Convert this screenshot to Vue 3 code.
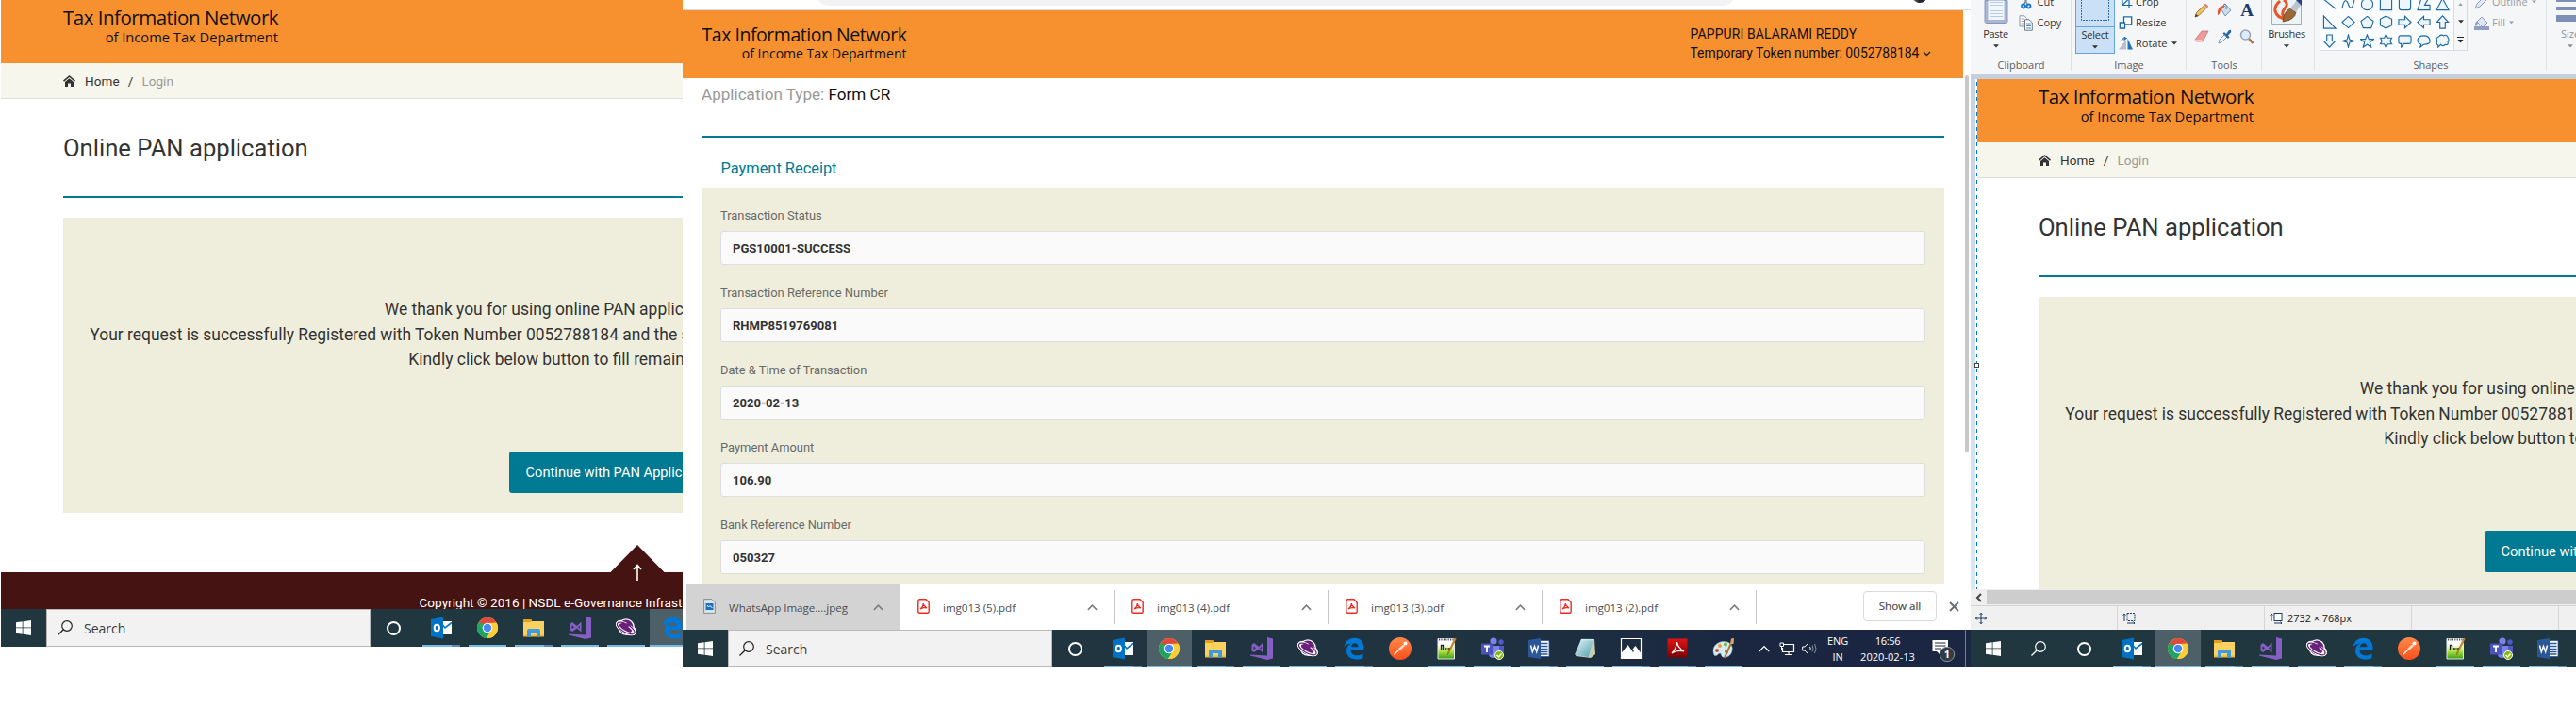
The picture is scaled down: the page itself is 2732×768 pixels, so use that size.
<script setup>
const windows = [
  {
    id: 'portal',
    tasks: ['outlook:stack', 'chrome:on', 'folder:stack', 'vs:on', 'orbit:on', 'edge:active'],
  },
  {
    id: 'receipt',
    tasks: ['outlook:stack', 'chrome:active', 'folder:stack', 'vs:on', 'orbit:on', 'edge:stack', 'postman:off', 'npp:on', 'teams:on', 'word:stack', 'notepad:on', 'photos:stack', 'acrobat:stack', 'paint:on'],
  },
  {
    id: 'paint',
    tasks: ['outlook:stack', 'chrome:active', 'folder:stack', 'vs:on', 'orbit:on', 'edge:stack', 'postman:off', 'npp:on', 'teams:on', 'word:stack'],
  },
].map((w) => ({
  ...w,
  tasks: w.tasks.map((t) => {
    const [icon, state] = t.split(':')
    return { icon, state }
  }),
}))

const fields = [
  ['Transaction Status', 'PGS10001-SUCCESS'],
  ['Transaction Reference Number', 'RHMP8519769081'],
  ['Date & Time of Transaction', '2020-02-13'],
  ['Payment Amount', '106.90'],
  ['Bank Reference Number', '050327'],
]

const downloads = ['WhatsApp Image....jpeg', 'img013 (5).pdf', 'img013 (4).pdf', 'img013 (3).pdf', 'img013 (2).pdf']

const shapes = [
  'M1 2L15 13', 'M1 13C3 2 6 2 8 8S13 14 15 2', 'M8 1.5a6.5 6.5 0 1 1 0 13a6.5 6.5 0 1 1 0-13z', 'M1.500 1.500h13v13h-13z', 'M4 1.500h8q2.500 0 2.500 2.500v8q0 2.500-2.500 2.500h-8q-2.500 0-2.500-2.500v-8q0-2.500 2.500-2.500z', 'M1 14.500L5 2H13L9 9H15V14.500z', 'M8 1.500L15 14.500H1z',
  'M1.500 1V15H15z', 'M8 1.500L15 8L8 14.500L1 8z', 'M8 1.500L15 7L12.500 14.500H3.500L1 7z', 'M8 1L14.500 4.500V11.500L8 15L1.500 11.500V4.500z', 'M1 5H8V1.500L15 8L8 14.500V11H1z', 'M15 5H8V1.500L1 8L8 14.500V11H15z', 'M5 15V8H1.500L8 1L14.500 8H11V15z',
  'M5 1V8H1.500L8 15L14.500 8H11V1z', 'M8 1L9.500 6.500L15 8L9.500 9.500L8 15L6.500 9.500L1 8L6.500 6.500z', 'M8 1L10 6H15.500L11 9.500L12.500 15L8 12L3.500 15L5 9.500L.5 6H6z', 'M8 .5L10 4.500H14.500L12.500 8L14.500 11.500H10L8 15.500L6 11.500H1.500L3.500 8L1.500 4.500H6z', 'M3 2H13Q15 2 15 4V9Q15 11 13 11H7L4 15V11H3Q1 11 1 9V4Q1 2 3 2z', 'M5 12Q1 10 1 7Q2 2 8 2T15 7T8 12L4 15z', 'M3 13Q0 11 2 8Q0 4 4 3Q6 0 9 2Q13 0 14 4Q16 7 14 9Q15 13 11 12Q8 15 6 12L3 15z',
]
</script>

<template>
  <svg class="sprite" aria-hidden="true">
    <defs>
      <linearGradient id="g-pad" x1="0" y1="0" x2="1" y2="1"><stop offset="0" stop-color="#e8f6f7" /><stop offset="1" stop-color="#4f9fae" /></linearGradient>
      <linearGradient id="g-red" x1="0" y1="0" x2="0" y2="1"><stop offset="0" stop-color="#e01313" /><stop offset="1" stop-color="#7c0303" /></linearGradient>
      <linearGradient id="g-post" x1="0" y1="0" x2="0" y2="1"><stop offset="0" stop-color="#ff8a4a" /><stop offset="1" stop-color="#fb4f1c" /></linearGradient>
      <linearGradient id="g-npp" x1="0" y1="0" x2="0" y2="1"><stop offset=".3" stop-color="#fff" /><stop offset=".6" stop-color="#b5e84a" /><stop offset="1" stop-color="#3a9c12" /></linearGradient>
    </defs>
    <symbol id="t-outlook" viewBox="0 0 24 24">
      <path d="M11 5H23V19H11z" fill="#fff" /><path d="M11.500 6.500L16 12L23 6.500" stroke="#0072c6" stroke-width="1.600" fill="none" />
      <path d="M1 3L14 .6V23.400L1 21z" fill="#0072c6" /><ellipse cx="7.300" cy="12" rx="2.600" ry="3.300" stroke="#fff" stroke-width="2" fill="none" />
    </symbol>
    <symbol id="t-chrome" viewBox="0 0 24 24">
      <circle cx="12" cy="12" r="11" fill="#fbce37" /><path d="M12 12L2.500 6.500A11 11 0 0 1 21.500 6.500L12 7z" fill="#dd4b3e" /><path d="M2.500 6.500A11 11 0 0 0 11 23L16 14.500L12 12L8 14z" fill="#1da362" /><path d="M2.500 6.500L8 14L9 8z" fill="#1da362" />
      <path d="M12 7H21.800A11 11 0 0 1 11 23L16.300 14.500z" fill="#fbce37" /><circle cx="12" cy="12" r="5.300" fill="#fff" /><circle cx="12" cy="12" r="4.200" fill="#4587f3" />
    </symbol>
    <symbol id="t-folder" viewBox="0 0 24 24">
      <path d="M1 3H9L10 5H23V21H1z" fill="#fbd25f" /><path d="M1 3H9.500V6H1z" fill="#e4a01b" /><path d="M1 19.500H23V21.500H1z" fill="#f0b93b" /><path d="M5 21.500V15Q5 13 7 13H17Q19 13 19 15V21.500H15V17H9V21.500z" fill="#3f9be0" />
    </symbol>
    <symbol id="t-vs" viewBox="0 0 24 24">
      <path d="M18 0L24 1.500V22.500L18 24L0 19.500V18.500L18 19.500z" fill="#865fc5" /><path d="M1.500 8L4 6L9 10L13.500 5.500V16.500L9 12.500L4 16L1.500 14.500zM3.500 9.500V13L6 11.200zM11.700 9.500L10 11.200L11.700 13z" fill="#865fc5" fill-rule="evenodd" />
    </symbol>
    <symbol id="t-orbit" viewBox="0 0 24 24">
      <ellipse cx="12" cy="12" rx="12" ry="6.500" transform="rotate(30 12 12)" fill="#fff" /><circle cx="12" cy="11" r="8.700" fill="#fff" /><circle cx="12" cy="11" r="7.500" fill="#68217a" />
      <ellipse cx="12" cy="12.500" rx="10.500" ry="4" transform="rotate(30 12 12)" fill="none" stroke="#fff" stroke-width="3" /><ellipse cx="12" cy="12.500" rx="10.500" ry="4.200" transform="rotate(30 12 12)" fill="none" stroke="#68217a" stroke-width="1.200" />
      <path d="M6 8L9 6L12 8L15 6L18 9L13 11.500z" fill="#68217a" />
    </symbol>
    <symbol id="t-edge" viewBox="0 0 24 24">
      <path d="M1.500 10.500C2.500 4 7 .7 12.500 .7C19 .7 22.500 5.500 22.500 11V14H8.500C8.700 17.600 11.500 19.300 15 19.300C17.500 19.300 19.700 18.600 21.500 17.500V22C19.500 23 17 23.500 14.300 23.500C8 23.500 4 19.800 4 14.300C4 10.800 6 7.900 8.900 6.500C5.500 6.700 3 8.300 1.500 10.500zM8.800 10.300H16.500C16.500 7.700 15 6.300 12.900 6.300C10.600 6.300 9.100 8 8.800 10.300z" fill="#0078d7" />
    </symbol>
    <symbol id="t-postman" viewBox="0 0 24 24">
      <circle cx="12" cy="12" r="12" fill="url(#g-post)" /><path d="M5.500 18.500L12 12L15 9" stroke="#fff" stroke-width="1.300" fill="none" /><path d="M10 12L15.500 7.500L17 9L12 14z" fill="#ffd9c8" /><circle cx="17.500" cy="6.500" r="2" fill="#fff" />
    </symbol>
    <symbol id="t-npp" viewBox="0 0 24 24">
      <path d="M3 1.500H20.500V23H3z" fill="url(#g-npp)" stroke="#e8e8e8" stroke-width="1" /><path d="M4 2.500H20" stroke="#555" stroke-width="2" stroke-dasharray="1.200 1.200" /><path d="M6.500 14V8.500H8.500V14M10 12H12.500M13.500 12H16" stroke="#222" stroke-width="1.300" fill="none" /><path d="M22.500 1.500L15 16L13.500 18.500L14 15.500L21 1z" fill="#f2a81d" stroke="#7e4b12" stroke-width=".6" />
    </symbol>
    <symbol id="t-teams" viewBox="0 0 24 24">
      <circle cx="21" cy="5" r="2.700" fill="#5059c9" /><circle cx="13" cy="4" r="3.600" fill="#7b83eb" /><path d="M15 9H24V15Q23 19 19 18z" fill="#5059c9" /><path d="M8 9H19V17Q18 22 13 22T8 18z" fill="#7b83eb" /><path d="M0 6.500H12V18.500H0z" fill="#4b53bc" /><path d="M3 9.500H9M6 9.500V16" stroke="#fff" stroke-width="1.800" /><circle cx="19" cy="19" r="4.500" fill="#7fba00" stroke="#fff" stroke-width="1" /><path d="M16.500 19L18.500 21L21.500 17.500" stroke="#fff" stroke-width="1.500" fill="none" />
    </symbol>
    <symbol id="t-word" viewBox="0 0 24 24">
      <path d="M12 3.500H23V20.500H12z" fill="#fff" stroke="#2b579a" stroke-width=".8" /><path d="M14 6.500H21.500M14 9.500H21.500M14 12.500H21.500M14 15.500H21.500M14 18H21.500" stroke="#2b579a" stroke-width="1.300" /><path d="M1 3L14 1V23L1 21z" fill="#2b579a" /><path d="M3.500 8.500L5.300 15.500L7.500 9.500L9.700 15.500L11.500 8.500" stroke="#fff" stroke-width="1.500" fill="none" />
    </symbol>
    <symbol id="t-notepad" viewBox="0 0 24 24">
      <path d="M8 2H22L23 18L18 22L2 20z" fill="#c9cdb0" /><path d="M8 2H21L15.500 21L1 18.500z" fill="url(#g-pad)" /><path d="M8.500 2.500H21" stroke="#dff" stroke-width="1.500" stroke-dasharray="1 1" />
    </symbol>
    <symbol id="t-photos" viewBox="0 0 24 24">
      <path d="M1.500 1.500H22.500V22.500H1.500z" fill="none" stroke="#fff" stroke-width="1.200" /><path d="M1.500 17L8.500 8L14 16L16.500 12.500L22.500 19V22.500H1.500z" fill="#fff" /><path d="M13.500 12.500L16.500 9L22.500 17V22H19z" fill="#fff" />
    </symbol>
    <symbol id="t-acrobat" viewBox="0 0 24 24">
      <path d="M1.500 1.500H22.500V21.500H1.500z" fill="url(#g-red)" /><path d="M11.500 5Q12.500 11 19 15Q13 13 6 17Q11 12 11.500 5z" fill="none" stroke="#fff" stroke-width="1.300" />
    </symbol>
    <symbol id="t-paint" viewBox="0 0 24 24">
      <path d="M2 19C-1 12 3 5 12 4.500C19 4.500 22 9 21 14C20 20 15 22 11 21C9 20 10 17 8 17C6 17 5 21 2 19z" fill="#d4ecf4" stroke="#90b9c8" stroke-width=".6" /><circle cx="5" cy="14" r="2" fill="#de4739" /><circle cx="8" cy="9" r="2" fill="#f19a2c" /><circle cx="14" cy="7.500" r="2" fill="#72b83c" /><circle cx="15" cy="15" r="2" fill="#3b7fd0" /><path d="M13 22L20 6" stroke="#b5722f" stroke-width="2" /><path d="M19 7L20 1.500L23 1L22.500 7z" fill="#d9a566" />
    </symbol>
    <symbol id="u-win" viewBox="0 0 16 16"><path d="M0 2.300L6.700 1.300V7.500H0zM7.500 1.200L16 0V7.500H7.500zM0 8.300H6.700V14.700L0 13.700zM7.500 8.300H16V16L7.500 14.800z" fill="#fff" /></symbol>
    <symbol id="u-search" viewBox="0 0 16 16"><circle cx="10" cy="6" r="5.300" fill="none" stroke="currentColor" stroke-width="1.200" /><path d="M6.300 9.700L.5 15.500" stroke="currentColor" stroke-width="1.300" /></symbol>
    <symbol id="u-up" viewBox="0 0 12 7"><path d="M1 6L6 1L11 6" fill="none" stroke="currentColor" stroke-width="1.800" /></symbol>
    <symbol id="u-pdf" viewBox="0 0 13 16"><path d="M2.500 .8H9L12.200 4V13.700Q12.200 15.200 10.700 15.200H2.300Q.8 15.200 .8 13.700V2.300Q.8 .8 2.500 .8z" fill="#fff" stroke="#ee2a22" stroke-width="1.400" /><path d="M6.300 5Q6.500 8 10 10Q7 8.800 3 11Q6.300 8.500 6.300 5z" fill="none" stroke="#ee2a22" stroke-width="1.100" /></symbol>
    <symbol id="u-down" viewBox="0 0 6 4"><path d="M0 .3H6L3 3.500z" fill="currentColor" /></symbol>
  </svg>

  <main class="desktop">
    <section v-for="w in windows" :key="w.id" class="window" :class="w.id">
      <header v-if="w.id === 'paint'" class="ribbon">
        <div class="group clip">
          <div class="gbody">
            <div class="big">
              <svg width="26" height="25" viewBox="0 0 26 25"><path d="M1 0H25V22Q25 24 23 24H3Q1 24 1 22z" fill="#a9b7d3" stroke="#8796bb" /><path d="M4.500 0H21.500V20.500H4.500z" fill="#f1f6fc" /><path d="M6 2H20M6 5H20M6 8H20M6 11H20M6 14H20M6 17H20" stroke="#b9cce6" /></svg>
              <span>Paste</span>
              <svg class="arr" width="6" height="4"><use href="#u-down" /></svg>
            </div>
            <div class="rows">
              <div class="row"><svg width="15" height="17" viewBox="0 0 15 17"><path d="M4 0L9 10M11 0L6 10" stroke="#7a8798" stroke-width="1.500" /><circle cx="5" cy="12.500" r="2" fill="none" stroke="#1979c8" stroke-width="1.800" /><circle cx="10.500" cy="12.500" r="2" fill="none" stroke="#1979c8" stroke-width="1.800" /></svg><span>Cut</span></div>
              <div class="row"><svg width="15" height="17" viewBox="0 0 15 17"><path d="M1 .8H6L8.500 3.500V12H1z" fill="#fff" stroke="#8d959e" /><path d="M2.500 4H6M2.500 6.500H6M2.500 9H6" stroke="#9aa5b1" /><path d="M6.500 4.800H11L14.300 8V16.200H6.500z" fill="#fff" stroke="#6f7882" /><path d="M8 9H13M8 11.500H13M8 14H13" stroke="#5d8fc0" /></svg><span>Copy</span></div>
            </div>
          </div>
          <div class="glabel">Clipboard</div>
        </div>
        <div class="group image">
          <div class="gbody">
            <div class="select">
              <svg width="40" height="28" viewBox="0 0 40 28"><rect x="5.500" y="-5" width="29" height="26.500" fill="none" stroke="#2a6aa5" stroke-dasharray="2 1" /></svg>
              <div class="selname"><span>Select</span><svg class="arr" width="6" height="4"><use href="#u-down" /></svg></div>
            </div>
            <div class="rows">
              <div class="row"><svg width="14" height="14" viewBox="0 0 14 14"><path d="M3.500 0V10.500H14M0 3.500H10.500V14M4 10L11 3" fill="none" stroke="#1b6aaa" stroke-width="1.200" /></svg><span>Crop</span></div>
              <div class="row"><svg width="14" height="14" viewBox="0 0 14 14"><path d="M5 .8H13.200V9H5z" fill="#fff" stroke="#1b6aaa" stroke-width="1.300" /><path d="M.8 7H6V13H.8z" fill="#fff" stroke="#1b6aaa" stroke-width="1.300" /></svg><span>Resize</span></div>
              <div class="row"><svg width="15" height="14" viewBox="0 0 15 14"><path d="M8 3V13.500H0z" fill="#b9bec6" /><path d="M9.500 2V13.500H15z" fill="#2374b5" /><path d="M3 5Q3 1.500 7 1.500M5.500 0L8 1.500L5.500 3.500" fill="none" stroke="#2374b5" stroke-width="1.200" /></svg><span>Rotate</span><svg class="rarr" width="6" height="4"><use href="#u-down" /></svg></div>
            </div>
          </div>
          <div class="glabel">Image</div>
        </div>
        <div class="group tools">
          <div class="gbody">
            <div class="toolgrid">
              <svg viewBox="0 0 16 16"><path d="M1 15L2.500 10.500L12 1.500L14.500 4L5 13.500z" fill="#f3c35c" stroke="#7d5a26" stroke-width=".8" /><path d="M11 2.500L12.500 1L15 3.500L13.500 5z" fill="#dd7b80" /><path d="M1 15L2 12L4 14z" fill="#333" /></svg>
              <svg viewBox="0 0 16 16"><path d="M4 6L9 1L15 8L9 14z" fill="#c8ddec" stroke="#6f8daa" stroke-width=".9" /><path d="M7 5Q7 0 9 1T10 7" fill="none" stroke="#6f8daa" /><path d="M9 3Q0 2 1 13Q3 13 4 8z" fill="#e8532a" /></svg>
              <b class="letter">A</b>
              <svg viewBox="0 0 16 16"><path d="M1 11L8 2H15L9 13H2z" fill="#f09a9a" stroke="#bf6a6f" stroke-width=".7" /><path d="M1 11H8.500L9 13.500H2z" fill="#f9c9c8" /></svg>
              <svg viewBox="0 0 16 16"><path d="M2 15L3 11L9 5L11.500 7.500L5.500 13.500z" fill="#e8f2fa" stroke="#6484a2" stroke-width=".8" /><path d="M8 3L10 5L13 1Q16 0 15 3.500L12 6.500L13.500 8.500L12 10L6.500 4.500z" fill="#2a66a8" /></svg>
              <svg viewBox="0 0 16 16"><path d="M10 10L14.500 15" stroke="#9a7648" stroke-width="2.600" /><circle cx="6.500" cy="6" r="5" fill="#dcecfa" stroke="#9aa5b2" stroke-width="1.500" /></svg>
            </div>
          </div>
          <div class="glabel">Tools</div>
        </div>
        <div class="group brushes">
          <div class="gbody">
            <div class="big">
              <svg width="32" height="26" viewBox="0 0 32 26"><path d="M.5 0V25.500H31.500V0" fill="#eaf3f6" stroke="#a4acb2" /><path d="M9 1Q3 6 4 12Q6 19 15 20Q9 15 14 9Q19 4 13 0" fill="none" stroke="#ea5527" stroke-width="3" /><path d="M12 23Q13 12 20 9L26 13Q25 21 12 23z" fill="#9a6737" stroke="#61401f" stroke-width=".7" /><path d="M20 9L27 0H32V4L26 13z" fill="#b9c4d0" /><path d="M26 0H32V6z" fill="#27457a" /></svg>
              <span>Brushes</span>
              <svg class="arr" width="6" height="4"><use href="#u-down" /></svg>
            </div>
          </div>
        </div>
        <div class="group shapes">
          <div class="gbody">
            <div class="gallery">
              <svg v-for="s in shapes" :key="s" viewBox="0 0 16 16"><path :d="s" /></svg>
            </div>
            <div class="gscroll">
              <svg class="dim" width="5" height="3" viewBox="0 0 6 4"><path d="M0 4H6L3 0z" fill="#9aa0a8" /></svg>
              <svg width="6" height="4"><use href="#u-down" /></svg>
              <svg width="7" height="7" viewBox="0 0 7 7"><path d="M0 .5H7" stroke="#222" /><path d="M.5 3H6.500L3.500 6.500z" fill="#222" /></svg>
            </div>
            <div class="rows faded">
              <div class="row"><svg width="16" height="16" viewBox="0 0 16 16"><path d="M1 15L3 10L12 1L15 4L6 13z" fill="#e3e9f3" stroke="#8c9cbc" /></svg><span>Outline</span><svg class="rarr" width="5" height="4"><use href="#u-down" /></svg></div>
              <div class="row"><svg width="16" height="16" viewBox="0 0 16 16"><path d="M0 12H16V16H0z" fill="#8e9fc1" /><path d="M3 7L8 2L14 8L9 13z" fill="#dfe5ef" stroke="#8c9cbc" /><path d="M4 6Q0 7 1.500 12Q4 11 4 6z" fill="#8c9cbc" /></svg><span>Fill</span><svg class="rarr" width="5" height="4"><use href="#u-down" /></svg></div>
            </div>
          </div>
          <div class="glabel">Shapes</div>
        </div>
        <div class="group size">
          <div class="bars"><i></i><i></i><i></i></div>
          <span>Size</span>
          <svg class="arr" width="6" height="4"><use href="#u-down" /></svg>
        </div>
      </header>

      <template v-if="w.id === 'receipt'">
        <div class="toolbar"><div class="omnibox"></div><div class="avatar"></div></div>
        <div class="viewport">
          <div class="sheet">
            <header class="brandbar">
              <div class="logo"><div>Tax Information Network</div><div class="sub">of Income Tax Department</div></div>
              <div class="user">
                <div class="uname">PAPPURI BALARAMI REDDY</div>
                <div>Temporary Token number: 0052788184 <svg width="9" height="6" viewBox="0 0 9 6"><path d="M1 1L4.500 4.500L8 1" fill="none" stroke="#222" stroke-width="1.300" /></svg></div>
              </div>
            </header>
            <div class="apptype">Application Type: <span>Form CR</span></div>
            <h2>Payment Receipt</h2>
            <div class="card">
              <div v-for="f in fields" :key="f[0]" class="field">
                <label>{{ f[0] }}</label>
                <div class="input">{{ f[1] }}</div>
              </div>
            </div>
          </div>
          <div class="vscroll"><div></div></div>
        </div>
        <div class="downloads">
          <div v-for="(d, i) in downloads" :key="d" class="dl" :class="{ hot: i === 0 }">
            <svg v-if="i" class="dicon" width="13" height="16"><use href="#u-pdf" /></svg>
            <svg v-else class="dicon" width="13" height="16" viewBox="0 0 13 16"><path d="M.6 .6H9L12.400 4V15.400H.6z" fill="#dce4ea" stroke="#858d94" /><path d="M2.500 5H10.500V12H2.500z" fill="#1f6fc0" /><path d="M4 7L5.500 9L7 7.500L9.500 10" fill="none" stroke="#fff" /></svg>
            <span>{{ d }}</span>
            <svg class="dchev" width="11" height="7"><use href="#u-up" /></svg>
          </div>
          <div class="showall">Show all</div>
          <svg class="close" width="11" height="11" viewBox="0 0 11 11"><path d="M1 1L10 10M10 1L1 10" stroke="#6b6f74" stroke-width="2" /></svg>
        </div>
      </template>

      <div v-else class="canvas">
        <div v-if="w.id === 'paint'" class="gutter"><div class="handle"></div></div>
        <div class="pan">
          <header class="brandbar">
            <div class="logo"><div>Tax Information Network</div><div class="sub">of Income Tax Department</div></div>
          </header>
          <nav>
            <svg width="13" height="12" viewBox="0 0 13 12"><path d="M0 5.500L6.500 0L13 5.500L12 6.700L6.500 2L1 6.700z" fill="#333" /><path d="M2 7L6.500 3.200L11 7V12H8V8.500H5V12H2z" fill="#333" /></svg>
            <span class="home">Home</span><span class="slash">/</span><span class="login">Login</span>
          </nav>
          <h1>Online PAN application</h1>
          <div class="notice">
            <p class="l1">We thank you for using online PAN applic</p>
            <p class="l2">Your request is successfully Registered with Token Number 0052788184 and the s</p>
            <p class="l3">Kindly click below button to fill remain</p>
            <div class="cta">Continue with PAN Applic</div>
          </div>
          <footer v-if="w.id === 'portal'">
            <svg class="totop" width="58" height="40" viewBox="0 0 58 40"><path d="M29 0L58 29.500V30H0V29.500z" fill="#451412" /><path d="M29 38V22M25 26L29 21.500L33 26" fill="none" stroke="#fff" stroke-width="1.600" /></svg>
            <p>Copyright © 2016 | NSDL e-Governance Infrast</p>
          </footer>
        </div>
      </div>

      <template v-if="w.id === 'paint'">
        <div class="hscroll"><div class="hbtn"><svg width="7" height="10" viewBox="0 0 7 10"><path d="M6 1L2 5L6 9" fill="none" stroke="#444" stroke-width="2" /></svg></div><div class="hthumb"></div></div>
        <div class="status">
          <div><svg width="12" height="12" viewBox="0 0 12 12"><path d="M6 0V12M0 6H12M4.500 2L6 .5L7.500 2M4.500 10L6 11.500L7.500 10M2 4.500L.5 6L2 7.500M10 4.500L11.500 6L10 7.500" fill="none" stroke="#1d3c66" /></svg></div>
          <div><svg width="14" height="12" viewBox="0 0 14 12"><path d="M2 9V1M.5 2.500L2 1L3.500 2.500M5 11H13M11.500 9.500L13 11L11.500 12.500" fill="none" stroke="#1d3c66" /><rect x="5" y=".5" width="8" height="8" fill="none" stroke="#1d3c66" stroke-dasharray="2 1" /></svg></div>
          <div><svg width="14" height="12" viewBox="0 0 14 12"><path d="M2 9V1M.5 2.500L2 1L3.500 2.500M5 11H13M11.500 9.500L13 11L11.500 12.500" fill="none" stroke="#1d3c66" /><rect x="5" y=".5" width="8" height="8" fill="#fff" stroke="#1d3c66" /></svg><span>2732 × 768px</span></div>
          <div></div>
          <div></div>
        </div>
      </template>

      <div class="taskbar">
        <div class="tcell"><svg width="16" height="16"><use href="#u-win" /></svg></div>
        <div v-if="w.id !== 'paint'" class="search"><svg width="16" height="16"><use href="#u-search" /></svg><span>Search</span></div>
        <div v-else class="tcell glass"><svg width="16" height="16"><use href="#u-search" /></svg></div>
        <div class="tcell"><i class="ring"></i></div>
        <div class="tasks">
          <div v-for="t in w.tasks" :key="t.icon" class="task" :class="t.state">
            <svg width="24" height="24"><use :href="'#t-' + t.icon" /></svg>
          </div>
        </div>
        <div v-if="w.id === 'receipt'" class="tray">
          <svg width="12" height="8" viewBox="0 0 12 8"><path d="M.8 7L6 1.500L11.200 7" fill="none" stroke="#fff" stroke-width="1.200" /></svg>
          <svg class="net" width="17" height="15" viewBox="0 0 17 15"><path d="M4 2.500H15.500V10.500H3.500V6M10 10.500V13.500M6 13.500H13" fill="none" stroke="#fff" stroke-width="1.200" /><path d="M1 1H4.500V4.500H1zM2.500 4.500V9" fill="none" stroke="#fff" /></svg>
          <svg class="vol" width="17" height="14" viewBox="0 0 17 14"><path d="M.7 5H3L6.500 1.500V12.500L3 9H.7z" fill="none" stroke="#fff" /><path d="M8.500 5Q10 7 8.500 9" fill="none" stroke="#fff" /><path d="M11 3.500Q13 7 11 10.500M13.500 2Q16.500 7 13.500 12" fill="none" stroke="#8791a0" /></svg>
          <div class="lang">ENG<br />IN</div>
          <div class="clock"><span>16:56</span><br />2020-02-13</div>
          <svg class="note" width="25" height="24" viewBox="0 0 25 24"><path d="M.5 1H17V13H8V16L5 13H.5z" fill="#fff" /><path d="M3 4H14.500M3 7H14.500M3 10H10" stroke="#1b2741" stroke-width="1.200" /><circle cx="16" cy="16" r="7.700" fill="#333b45" stroke="#8b929b" /><text x="16" y="20" text-anchor="middle">1</text></svg>
        </div>
      </div>
    </section>
  </main>
</template>

<style>
body { background: #fff; overflow: hidden; }
</style>

<style scoped>
* { box-sizing: border-box; }
svg { display: block; flex: none; }
.sprite { position: absolute; width: 0; height: 0; }
.desktop { display: flex; width: 2732px; height: 768px; overflow: hidden; background: #fff; font-family: Roboto, sans-serif; white-space: nowrap; }
.window { flex: none; display: flex; flex-direction: column; overflow: hidden; align-self: flex-start; background: #fff; }
.portal { width: 724px; height: 686px; padding-left: 1px; }
.receipt { width: 1366px; height: 708px; }
.paint { width: 642px; height: 708px; background: #f5f6f8; }

/* PAN landing page */
.canvas { flex: 1; min-height: 0; display: flex; overflow: hidden; }
.pan { flex: 1; min-width: 0; background: #fff; overflow: hidden; }
.brandbar { background: #f7902e; }
.pan .brandbar { height: 67px; padding: 8px 0 0 66px; }
.paint .pan .brandbar { padding-left: 65px; }
.logo { width: 228px; font: 20.5px/20px "Open Sans", sans-serif; letter-spacing: -.49px; color: #111; }
.logo .sub { font-size: 14.7px; line-height: 18px; letter-spacing: 0; text-align: right; margin-top: 2px; }
.pan nav { display: flex; align-items: center; height: 38px; padding-left: 66px; background: #f6f6ec; border-bottom: 1px solid #dcdddc; font-size: 13.55px; line-height: 16px; color: #333; }
.paint .pan nav { padding-left: 65px; }
.home { margin-left: 10px; letter-spacing: .1px; }
.slash { margin: 0 9px 0 9px; }
.login { color: #9b9b98; }
.pan h1 { margin: 0 0 0 66px; height: 105px; border-bottom: 2px solid #007a92; padding-top: 37px; font-size: 25.6px; line-height: 30px; font-weight: 400; color: #333; }
.notice { margin: 21px 0 0 66px; height: 313px; background: #efeedd; padding-top: 84px; overflow: hidden; font-size: 17.46px; line-height: 26.600px; color: #333; }
.paint .pan h1, .paint .notice { margin-left: 65px; }
.notice p { margin: 0; }
.l1 { padding-left: 340.700px; }
.l2 { padding-left: 28.300px; }
.l3 { padding-left: 366.300px; }
.cta { margin: 84px 0 0 473px; width: 300px; height: 44px; border-radius: 3px; background: #007a92; color: #fff; font-size: 14.680px; line-height: 44px; padding-left: 17.500px; }
.portal footer { position: relative; margin-top: 63px; height: 40px; background: #451412; color: #fff; font-size: 13.600px; line-height: 20px; }
.totop { position: absolute; left: 646px; top: -29px; }
footer p { margin: 0; padding: 22px 0 0 443.500px; }

/* receipt page */
.toolbar { position: relative; height: 11px; flex: none; border-bottom: 1px solid #d9dadc; overflow: hidden; }
.omnibox { margin: -20px 0 0 142px; width: 974px; height: 26px; border-radius: 13px; background: #f1f3f4; }
.avatar { position: absolute; left: 1304px; top: -13px; width: 16px; height: 16px; border-radius: 50%; background: linear-gradient(90deg, #8d8175, #20262e 45%); }
.viewport { height: 608px; flex: none; display: flex; overflow: hidden; }
.sheet { width: 1358px; overflow: hidden; }
.sheet .brandbar { height: 72px; display: flex; padding: 16px 0 0 20.500px; }
.sheet .logo { width: 217px; font-size: 19.500px; letter-spacing: -.465px; }
.sheet .sub { font-size: 14px; letter-spacing: 0; margin-top: 1px; }
.user { margin: -1px 0 0 831px; font-size: 13.920px; line-height: 20.300px; color: #111; }
.uname { letter-spacing: .15px; }
.user svg { display: inline-block; vertical-align: 1px; }
.apptype { margin: 0 20px; height: 63px; border-bottom: 2px solid #007a92; padding-top: 5px; font-size: 17.100px; line-height: 24px; color: #999; }
.apptype span { color: #111; }
h2 { margin: 23px 0 0 40.500px; height: 30px; font-size: 16.400px; line-height: 20px; font-weight: 400; color: #007a92; }
.card { margin: 0 20px; padding: 22px 20px 0; height: 430px; background: #efeedd; }
.field { height: 82px; }
.field label { display: block; font-size: 12.900px; line-height: 16px; color: #6a6a66; margin-bottom: 8px; }
.input { height: 36px; border: 1px solid #dcdddd; border-radius: 3px; background: #fafafa; padding-left: 12px; font-size: 13.050px; line-height: 36px; font-weight: 700; color: #333; }
.vscroll { width: 8px; padding: 69px 0 0 2px; }
.vscroll div { width: 4px; height: 400px; border-radius: 2px; background: #c8c8c8; }
.downloads { height: 49px; flex: none; display: flex; border-top: 1px solid #d9dadc; padding-left: 4px; font: 11.600px/16px "Open Sans", sans-serif; letter-spacing: -.03px; color: #4c4f53; }
.dl { position: relative; width: 227px; display: flex; padding: 15px 0 0 18px; }
.dl::after { content: ""; position: absolute; right: 0; top: 6px; width: 1px; height: 36px; background: #c6c7c9; }
.dl.hot { background: #d3d3d3; }
.dl span { margin: 2px 0 0 14px; }
.dchev { margin: 6px 18px 0 auto; color: #7b7e82; }
.showall { margin: 7px 0 0 113px; width: 78px; height: 32px; border: 1px solid #d8dadd; border-radius: 4px; text-align: center; line-height: 30px; -webkit-text-stroke: .2px #4c4f53; }
.close { margin: 18px 0 0 13px; }

/* paint ribbon */
.ribbon { flex: none; height: 84px; display: flex; overflow: hidden; border-bottom: 5px solid #c4cfe0; box-shadow: inset 0 -1px #d6dade; font: 11px/14px "Open Sans", sans-serif; color: #333; }
.group { position: relative; flex: none; height: 79px; }
.group::after { content: ""; position: absolute; right: 0; top: 0; width: 1px; height: 75px; background: #dfe2e6; }
.clip { width: 107px; } .image { width: 122px; } .tools { width: 80px; } .brushes { width: 56px; } .shapes { width: 246px; } .size { width: 40px; }
.gbody { display: flex; height: 61px; }
.glabel { text-align: center; line-height: 15px; color: #5b5f66; }
.big { width: 37px; margin-left: 8px; display: flex; flex-direction: column; align-items: center; letter-spacing: -.3px; }
.big span { margin-top: auto; }
.big svg:first-child { height: 26px; }
.big { height: 51px; justify-content: space-between; }
.arr { margin-top: 4px; }
.rows { margin: -9px 0 0 6px; }
.row { display: flex; align-items: center; height: 22px; }
.row svg:first-child { width: 15px; margin-right: 4.500px; }
.select { width: 42px; height: 57px; margin-left: 4px; border: 1px solid #64a4e4; border-top: 0; background: #c9e0f7; }
.select svg:first-child { border-bottom: 1px solid #64a4e4; height: 29px; }
.selname { display: flex; flex-direction: column; align-items: center; padding-top: 0; line-height: 15px; letter-spacing: -.2px; }
.image .rows { margin-left: 4px; }
.image .row svg:first-child { margin-right: 3px; }
.row .rarr { margin-left: 4px; }
.toolgrid { display: grid; grid-template-columns: repeat(3, 16px); grid-template-rows: 16px 16px; gap: 12px 8px; margin: 3px 0 0 8px; }
.letter { font: bold 19px/16px "Liberation Serif", serif; color: #1f3b63; text-align: center; }
.brushes .big { width: 42px; margin-left: 5px; }
.gallery { margin-left: 5px; width: 143px; height: 54px; overflow: hidden; padding: 0 0 0 2px; border: 1px solid #d7dce3; border-top: 0; background: #fbfcfd; display: grid; grid-template-columns: repeat(7, 20px); grid-template-rows: repeat(3, 19.500px); align-content: end; align-items: center; }
.gallery svg { width: 15px; height: 15px; fill: #eef5fb; stroke: #1d68a5; stroke-width: 1.200; }
.gallery svg:nth-child(-n+2) { fill: none; }
.gscroll { width: 14px; height: 54px; border: 1px solid #d7dce3; border-width: 0 1px 1px 0; display: flex; flex-direction: column; align-items: center; justify-content: space-between; padding: 3px 0 7px; }
.faded { color: #9a9da2; }
.faded .row svg:first-child { width: 16px; margin-right: 3px; }
.shapes .rows { margin-left: 7px; }
.size { color: #8f9298; padding-left: 10px; }
.bars { height: 29px; }
.bars i { display: block; height: 4px; background: #7b90b4; margin-bottom: 5px; }
.bars i:first-child { height: 2px; } .bars i:last-child { height: 7px; margin-bottom: 0; }
.size > span { display: block; margin-left: 5px; }
.size .arr { margin-left: 12px; }
.gutter { position: relative; width: 7px; background: repeating-linear-gradient(180deg, #fff 0 3px, #0078d7 3px 7px, #fff 7px 8px) right / 1px 100% no-repeat, linear-gradient(#c6d2e5, #dce7f5) left / 5px 100% no-repeat, #fff; }
.handle { position: absolute; left: 4px; top: 301px; width: 5px; height: 5px; border: 1px solid #444; background: #fff; }
.hscroll { height: 18px; display: flex; flex: none; background: #efefef; border-bottom: 1px solid #d2d3d4; padding: 1px 0; }
.hbtn { width: 17px; display: grid; place-items: center; }
.hthumb { flex: 1; background: #cdcdcd; }
.status { height: 25px; flex: none; display: flex; background: #f0f0f0; font: 10.900px/24px "Open Sans", sans-serif; color: #222; }
.status div { width: 156px; flex: none; display: flex; align-items: center; gap: 5px; padding-left: 5px; border-right: 1px solid #d6d6d6; }

/* taskbar */
.taskbar { height: 40px; flex: none; display: flex; overflow: hidden; background: #213740; }
.receipt .taskbar { background: linear-gradient(90deg, #213740, #1f3340 60%, #1b2741 82%, #1a2642); }
.tcell { flex: none; width: 48px; display: grid; place-items: center; color: #fff; }
.search { flex: none; width: 344px; display: flex; align-items: center; background: #f2f2f2; border: 1px solid #b9b9b9; padding-left: 11px; color: #222; }
.search span { font: 14px/20px "Open Sans", sans-serif; color: #3b3b3b; margin: 1px 0 0 12px; }
.ring { width: 15px; height: 15px; border: 2px solid #fff; border-radius: 50%; }
.tasks { flex: none; display: flex; gap: 1px; margin-left: 3px; }
.task { position: relative; flex: none; width: 48px; display: grid; place-items: center; }
.task::after { content: ""; position: absolute; left: 4px; bottom: 0; width: 40px; height: 2px; background: #76b9ed; }
.task.stack::after { background: linear-gradient(90deg, #76b9ed 31px, #5a8dbb 31px); }
.task.off::after { display: none; }
.task.active { background: #4d5f67; }
.task.active::after { left: 0; width: 48px; }
.tray { display: flex; align-items: center; padding-left: 13px; width: 233px; border-right: 1px solid #76808f; color: #fff; font: 11.100px/17px "Open Sans", sans-serif; text-align: center; }
.net { margin-left: 10px; }
.vol { margin-left: 7px; }
.lang { width: 30px; margin-left: 6px; font-size: 10.900px; }
.clock { width: 66px; margin-left: 5px; }
.clock span { letter-spacing: -.4px; }
.note { margin: 4px 0 0 14px; }
.note text { fill: #fff; font: bold 11px "Open Sans", sans-serif; }
</style>
